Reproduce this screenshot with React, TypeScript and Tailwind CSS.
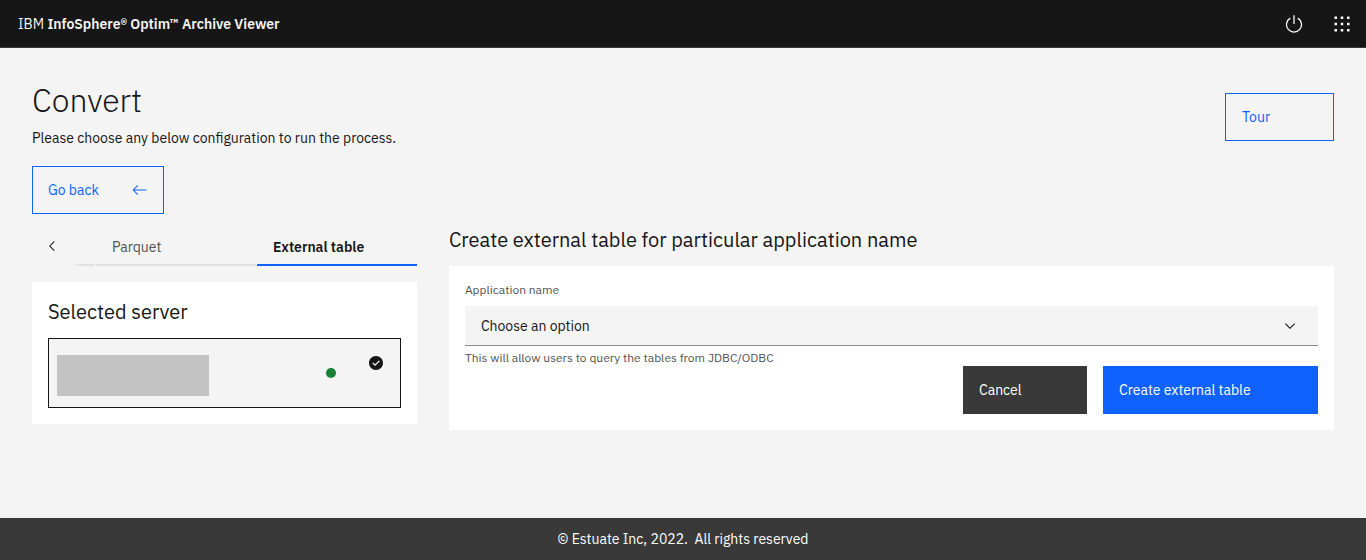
import React from "react";

function PowerIcon() {
  return (
    <svg viewBox="0 0 32 32" className="size-5" fill="currentColor" aria-hidden="true">
      <path d="M22.5 5.74l-1 1.73a11 11 0 1 1-11 0l-1-1.73a13 13 0 1 0 13 0Z" />
      <path d="M15 2h2v14h-2z" />
    </svg>
  );
}

function SwitcherIcon() {
  const steps = [4, 14, 24];
  return (
    <svg viewBox="0 0 32 32" className="size-5" fill="currentColor" aria-hidden="true">
      {steps.flatMap((y) => steps.map((x) => <rect key={`${x}-${y}`} x={x} y={y} width="4" height="4" />))}
    </svg>
  );
}

function ArrowLeftIcon() {
  return (
    <svg viewBox="0 0 32 32" className="size-4" fill="currentColor" aria-hidden="true">
      <path d="M11 26l1.41-1.41L4.83 17H29v-2H4.83l7.58-7.59L11 6 1 16l10 10Z" />
    </svg>
  );
}

function ChevronLeftIcon() {
  return (
    <svg viewBox="0 0 16 16" className="size-4" fill="currentColor" aria-hidden="true">
      <path d="M5 8l5-5 .7.7L6.4 8l4.3 4.3-.7.7z" />
    </svg>
  );
}

function ChevronDownIcon() {
  return (
    <svg viewBox="0 0 16 16" className="size-4" fill="currentColor" aria-hidden="true">
      <path d="M8 11L3 6l.7-.7L8 9.6l4.3-4.3.7.7z" />
    </svg>
  );
}

function CheckmarkFilledIcon() {
  return (
    <svg viewBox="0 0 16 16" className="size-4" fill="currentColor" aria-hidden="true">
      <path d="M8 1C4.1 1 1 4.1 1 8s3.1 7 7 7 7-3.1 7-7-3.1-7-7-7zM7 11L4.3 8.3l.9-.8L7 9.3l4-3.9.9.8L7 11z" />
    </svg>
  );
}

function Header() {
  return (
    <header className="flex h-12 items-center justify-between border-b border-[#393939] bg-[#161616] text-white">
      <a href="#home" className="px-[18px] text-sm font-semibold text-[#f4f4f4]">
        <span className="font-normal">IBM</span> InfoSphere® Optim™ Archive Viewer
      </a>
      <div className="flex">
        <button type="button" aria-label="Log out" className="flex size-12 items-center justify-center">
          <PowerIcon />
        </button>
        <button type="button" aria-label="Switch application" className="flex size-12 items-center justify-center">
          <SwitcherIcon />
        </button>
      </div>
    </header>
  );
}

function Tabs() {
  return (
    <div className="flex h-10">
      <button type="button" aria-label="Scroll left" className="flex w-10 items-center justify-center">
        <ChevronLeftIcon />
      </button>
      <div role="tablist" className="flex min-w-0 flex-1 justify-end gap-px text-sm">
        <span className="mt-auto h-0.5 flex-1 bg-gradient-to-r from-transparent to-[#e0e0e0] to-40%" />
        <button
          type="button"
          role="tab"
          aria-selected="false"
          className="w-40 border-b-2 border-[#e0e0e0] px-4 pt-1 text-left text-[#525252]"
        >
          Parquet
        </button>
        <button
          type="button"
          role="tab"
          aria-selected="true"
          className="w-40 border-b-2 border-[#0f62fe] px-4 pt-1 text-left font-semibold"
        >
          External table
        </button>
      </div>
    </div>
  );
}

function SelectedServer() {
  return (
    <section className="mt-4 bg-white p-4">
      <h2 className="text-xl leading-7 font-normal">Selected server</h2>
      <div className="mt-3 flex h-[70px] items-start border border-[#161616] bg-[#f4f4f4] px-2 py-4">
        <div className="h-[41px] w-[152px] bg-[#c3c3c3]" />
        <div className="mt-[13px] ml-auto size-2.5 rounded-full bg-[#198038]" />
        <div className="mr-2 ml-8">
          <CheckmarkFilledIcon />
        </div>
      </div>
    </section>
  );
}

function ExternalTableForm() {
  return (
    <form className="bg-white p-4" onSubmit={(event) => event.preventDefault()}>
      <label htmlFor="application" className="block text-xs leading-4 text-[#525252]">
        Application name
      </label>
      <div className="relative mt-2">
        <select
          id="application"
          aria-describedby="application-help"
          className="block h-10 w-full appearance-none rounded-none border-b border-[#8d8d8d] bg-[#f4f4f4] px-4 text-sm"
        >
          <option>Choose an option</option>
        </select>
        <span className="pointer-events-none absolute inset-y-0 right-5 flex items-center">
          <ChevronDownIcon />
        </span>
      </div>
      <p id="application-help" className="mt-1 text-xs leading-4 text-[#525252]">
        This will allow users to query the tables from JDBC/ODBC
      </p>
      <div className="flex justify-end gap-4 text-sm text-white">
        <button type="button" className="h-12 w-[124px] bg-[#393939] px-4 text-left">
          Cancel
        </button>
        <button type="submit" className="h-12 w-[215px] bg-[#0f62fe] px-4 text-left">
          Create external table
        </button>
      </div>
    </form>
  );
}

export default function App() {
  return (
    <div className="flex min-h-screen flex-col bg-[#f4f4f4] font-['IBM_Plex_Sans','Noto_Sans',sans-serif] text-[#161616]">
      <Header />
      <main className="flex-1 px-4 pt-8">
        <div className="flex items-start justify-between px-4">
          <div>
            <h1 className="text-[32px] leading-10 font-light">Convert</h1>
            <p className="mt-2 text-sm leading-5">Please choose any below configuration to run the process.</p>
          </div>
          <button
            type="button"
            className="mt-[13px] h-12 w-[109px] border border-[#0f62fe] px-4 text-left text-sm text-[#0f62fe]"
          >
            Tour
          </button>
        </div>
        <div className="mt-[18px] px-4">
          <button
            type="button"
            className="flex h-12 w-[132px] items-center justify-between border border-[#0f62fe] px-[15px] text-sm text-[#0f62fe]"
          >
            Go back
            <ArrowLeftIcon />
          </button>
        </div>
        <div className="mt-3 grid grid-cols-[5fr_11fr] items-start">
          <div className="min-w-0 px-4">
            <Tabs />
            <SelectedServer />
          </div>
          <div className="min-w-0 px-4">
            <h2 className="mb-3 text-xl leading-7 font-normal">Create external table for particular application name</h2>
            <ExternalTableForm />
          </div>
        </div>
      </main>
      <footer className="bg-[#393939] py-[11px] text-center text-sm leading-5 text-white">
        © Estuate Inc, 2022.&nbsp; All rights reserved
      </footer>
    </div>
  );
}
